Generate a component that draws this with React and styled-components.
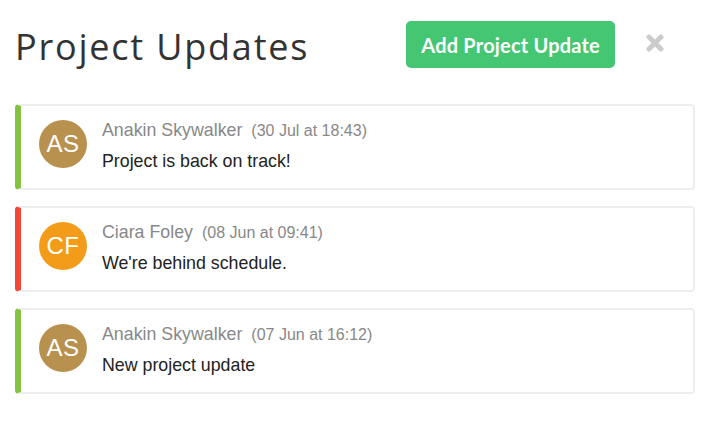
import React from 'react';
import styled, { createGlobalStyle } from 'styled-components';

const GlobalStyle = createGlobalStyle`
  body {
    margin: 0;
    background: #fff;
    font-family: "Liberation Sans", Arial, sans-serif;
  }
`;

const Page = styled.div`
  padding: 21px 16px 0 15px;
`;

const Header = styled.header`
  display: flex;
  align-items: flex-start;
  margin-bottom: 34px;
`;

const Title = styled.h1`
  flex: 1;
  margin: 0;
  padding: 2px 0 0 0;
  font-family: "Open Sans", Lato, sans-serif;
  font-weight: 400;
  font-size: 36px;
  line-height: 47px;
  letter-spacing: 1.8px;
  color: #333;
`;

const AddButton = styled.button`
  height: 47px;
  padding: 0 15px;
  border: none;
  border-radius: 5px;
  background: #45c672;
  color: #fff;
  font-family: Lato, "Open Sans", sans-serif;
  font-weight: 700;
  font-size: 20px;
  letter-spacing: 0.2px;
  cursor: pointer;
`;

const CloseButton = styled.button`
  width: 18px;
  height: 18px;
  margin: 13px 31px 0 31px;
  padding: 0;
  border: none;
  background: none;
  cursor: pointer;
  display: flex;
`;

const List = styled.div`
  display: flex;
  flex-direction: column;
  gap: 16px;
`;

const Card = styled.div`
  display: flex;
  align-items: flex-start;
  gap: 15px;
  padding: 14px 18px 16px 18px;
  border: 2px solid #eee;
  border-left: 6px solid ${p => p.$status};
  border-radius: 4px;
`;

const Avatar = styled.div`
  flex: none;
  width: 48px;
  height: 48px;
  border-radius: 50%;
  background: ${p => p.$color};
  color: #fff;
  display: flex;
  align-items: center;
  justify-content: center;
  font-size: 24px;
  letter-spacing: 0.5px;
`;

const Body = styled.div`
  display: flex;
  flex-direction: column;
  gap: 9px;
`;

const Meta = styled.div`
  display: flex;
  align-items: baseline;
  gap: 9px;
  line-height: 20px;
`;

const Author = styled.span`
  font-size: 17.8px;
  color: #888;
`;

const Stamp = styled.span`
  font-size: 16px;
  color: #888;
`;

const Message = styled.p`
  margin: 0;
  font-size: 17.8px;
  line-height: 22px;
  color: #222;
`;

const updates = [
  { initials: 'AS', name: 'Anakin Skywalker', when: '(30 Jul at 18:43)', text: 'Project is back on track!', status: '#84c341', avatar: '#b8914f' },
  { initials: 'CF', name: 'Ciara Foley', when: '(08 Jun at 09:41)', text: "We're behind schedule.", status: '#f2473a', avatar: '#f39c1a' },
  { initials: 'AS', name: 'Anakin Skywalker', when: '(07 Jun at 16:12)', text: 'New project update', status: '#84c341', avatar: '#b8914f' },
];

export default function App() {
  return (
    <Page>
      <GlobalStyle />
      <Header>
        <Title>Project Updates</Title>
        <AddButton>Add Project Update</AddButton>
        <CloseButton aria-label="Close">
          <svg width="18" height="18" viewBox="0 0 18 18">
            <path d="M3 3L15 15M15 3L3 15" stroke="#cccccc" strokeWidth="5" strokeLinecap="round" />
          </svg>
        </CloseButton>
      </Header>
      <List>
        {updates.map((u, i) => (
          <Card key={i} $status={u.status}>
            <Avatar $color={u.avatar}>{u.initials}</Avatar>
            <Body>
              <Meta>
                <Author>{u.name}</Author>
                <Stamp>{u.when}</Stamp>
              </Meta>
              <Message>{u.text}</Message>
            </Body>
          </Card>
        ))}
      </List>
    </Page>
  );
}
